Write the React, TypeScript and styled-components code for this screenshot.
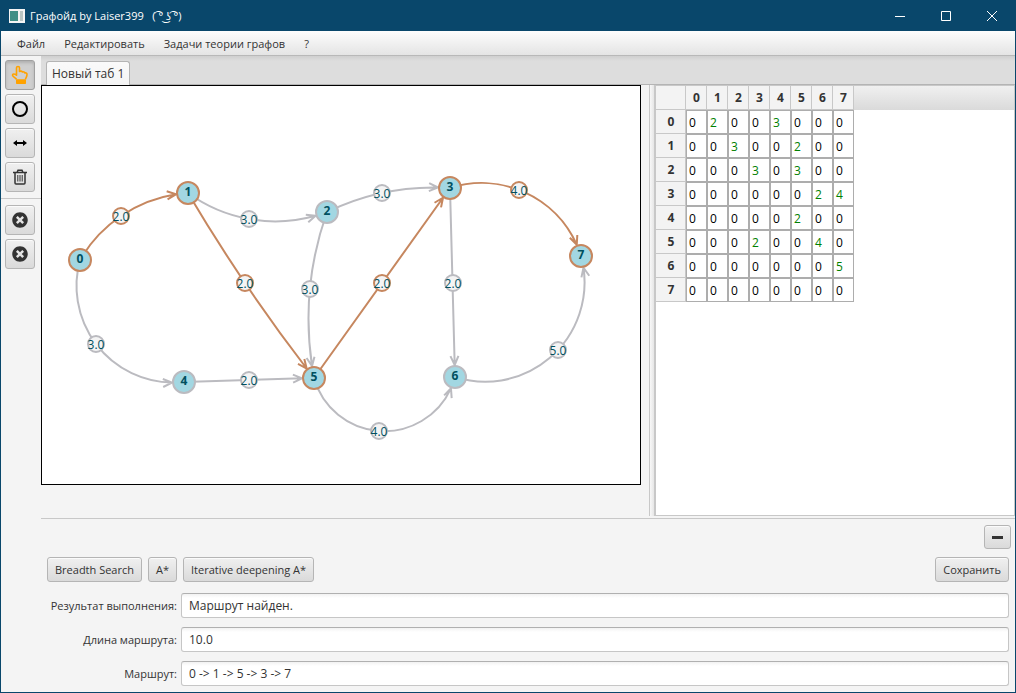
import React from "react";
import styled, { createGlobalStyle, css } from "styled-components";
import { FaTimesCircle } from "react-icons/fa";

const FONT = `"Open Sans", "Noto Sans", "Segoe UI", sans-serif`;
const FRAME = "#09476b";
const RIM = "#b5b5b5";
const GREY = "#bbbbc0";
const COPPER = "#c6875f";

const GlobalStyle = createGlobalStyle`
  *, *::before, *::after { box-sizing: border-box; }
  body { margin: 0; background: #f4f4f4; color: #333; font: 12px/16px ${FONT}; }
  button, input { font: inherit; color: inherit; margin: 0; }
`;

const Window = styled.div`
  display: flex;
  flex-direction: column;
  min-height: 100vh;
  border: solid ${FRAME};
  border-width: 0 1px 1px;
`;

const TitleBar = styled.header`
  display: flex;
  align-items: center;
  height: 31px;
  padding-left: 8px;
  background: ${FRAME};
  color: #fff;
`;

const Title = styled.h1`
  flex: 1;
  margin: 0 0 0 5px;
  font-size: 11px;
  font-weight: 400;
  white-space: pre;
`;

const CaptionButton = styled.button`
  display: grid;
  place-items: center;
  width: 46px;
  height: 31px;
  padding: 0;
  border: 0;
  background: none;
  color: #fff;
`;

const MenuBar = styled.nav`
  display: flex;
  height: 25px;
  padding-left: 8px;
  background: linear-gradient(#fdfdfd, #e4e4e4);
  border-bottom: 1px solid #b8b8b8;
`;

const MenuItem = styled.button`
  height: 24px;
  padding: 2px 11px 0 8px;
  border: 0;
  background: none;
  font-size: 11px;
`;

const Body = styled.div`
  flex: 1;
  display: flex;
`;

const ToolBar = styled.aside`
  display: flex;
  flex-direction: column;
  gap: 4px;
  width: 40px;
  padding: 4px;
`;

const buttonFace = css`
  border: 1px solid ${RIM};
  border-radius: 3px;
  background: linear-gradient(#f0f0f0, #dadada);
  box-shadow: inset 0 1px #fbfbfb;
`;

const ToolButton = styled.button<{ $pressed?: boolean }>`
  display: grid;
  place-items: center;
  width: 30px;
  height: 30px;
  padding: 0;
  ${buttonFace}
  ${(p) =>
    p.$pressed &&
    css`
      background: #cfcfcf;
      border-color: #a0a0a0;
      box-shadow: inset 0 2px 3px #b0b0b0;
    `}
`;

const ToolRule = styled.hr`
  width: 40px;
  margin: 2px -4px;
  border: 0;
  border-top: 1px solid #c8c8c8;
`;

const Main = styled.main`
  flex: 1;
  min-width: 0;
  display: flex;
  flex-direction: column;
`;

const TabStrip = styled.div`
  display: flex;
  align-items: flex-end;
  height: 29px;
  padding-left: 5px;
  background: linear-gradient(#cfcfcf, #dddddd 5px);
  border-bottom: 1px solid #b4b4b4;
`;

const Tab = styled.button`
  height: 24px;
  margin-bottom: -1px;
  padding: 0 5px;
  border: 1px solid #b4b4b4;
  border-bottom: 0;
  border-radius: 3px 3px 0 0;
  background: linear-gradient(#fafafa, #f4f4f4);
`;

const Split = styled.div`
  flex: 1;
  display: grid;
  grid-template-columns: minmax(0, 608fr) 6px minmax(0, 360fr);
`;

const Canvas = styled.svg`
  display: block;
  width: 100%;
  max-width: 600px;
  height: auto;
  background: #fff;
  border: 1px solid #000;
`;

const Divider = styled.div`
  border: solid #c8c8c8;
  border-width: 0 1px;
  background: linear-gradient(90deg, #f8f8f8, #e6e6e6);
`;

const MatrixPane = styled.section`
  border: 1px solid #c8c8c8;
  background: linear-gradient(#f0f0f0, #dadada) top / 100% 24px no-repeat #fff;
`;

const Matrix = styled.table`
  border-collapse: separate;
  border-spacing: 0;
  table-layout: fixed;
  width: 198px;
  background: #fff;
`;

const HeadCell = styled.th`
  width: 21px;
  height: 24px;
  padding: 1px 0 0 1px;
  background: #f3f3f3;
  border: solid #c8c8c8;
  border-width: 0 1px 1px 0;
  text-align: center;

  &:first-child {
    width: 30px;
  }
`;

const Cell = styled.td<{ $linked: boolean }>`
  height: 24px;
  padding: 1px 0 0 2px;
  border: 1px solid #adadad;
  color: ${(p) => (p.$linked ? "#008000" : "#000")};
`;

const Results = styled.section`
  display: flex;
  flex-direction: column;
  margin-top: 2px;
  border-top: 1px solid #c8c8c8;
  padding: 6px;
`;

const Row = styled.div`
  display: flex;
  align-items: center;
  gap: 6px;
`;

const CollapseButton = styled.button`
  display: grid;
  place-items: center;
  align-self: flex-end;
  width: 27px;
  height: 24px;
  margin: 0 -2px 8px 0;
  padding: 0;
  ${buttonFace}
`;

const Button = styled.button<{ $end?: boolean }>`
  height: 25px;
  padding: 0 7px;
  font-size: 11px;
  white-space: nowrap;
  ${buttonFace}
  ${(p) => p.$end && "margin-left: auto;"}
`;

const Form = styled.form`
  display: grid;
  grid-template-columns: 130px 1fr;
  align-items: center;
  gap: 9px 4px;
  margin-top: 11px;
`;

const FieldLabel = styled.label`
  font-size: 11px;
  text-align: right;
  white-space: nowrap;
`;

const Field = styled.input`
  width: 100%;
  height: 25px;
  padding: 0 7px;
  border: 1px solid #c6c6c6;
  border-top-color: #b0b0b0;
  border-radius: 3px;
  background: linear-gradient(#f2f2f2, #fff 4px);
`;

type Point = [number, number];

const NODES: { at: Point; onRoute?: boolean }[] = [
  { at: [39, 175], onRoute: true },
  { at: [147, 108], onRoute: true },
  { at: [286, 127] },
  { at: [409, 103], onRoute: true },
  { at: [143, 297] },
  { at: [273, 293], onRoute: true },
  { at: [414, 292] },
  { at: [540, 171], onRoute: true },
];

const EDGES: { from: number; to: number; weight: number; at: Point; onRoute?: boolean }[] = [
  { from: 0, to: 4, weight: 3, at: [55, 259] },
  { from: 1, to: 2, weight: 3, at: [208, 134] },
  { from: 2, to: 3, weight: 3, at: [341, 108] },
  { from: 2, to: 5, weight: 3, at: [269, 204] },
  { from: 3, to: 6, weight: 2, at: [412, 198] },
  { from: 4, to: 5, weight: 2, at: [208, 295] },
  { from: 5, to: 6, weight: 4, at: [338, 346] },
  { from: 6, to: 7, weight: 5, at: [517, 265] },
  { from: 0, to: 1, weight: 2, at: [80, 131], onRoute: true },
  { from: 1, to: 5, weight: 2, at: [204, 198], onRoute: true },
  { from: 5, to: 3, weight: 2, at: [341, 198], onRoute: true },
  { from: 3, to: 7, weight: 4, at: [478, 105], onRoute: true },
];

/* Arc through both node centres and the weight label, with a head on the target's rim. */
function edgePath([ax, ay]: Point, [bx, by]: Point, [cx, cy]: Point) {
  const cross = (bx - ax) * (cy - ay) - (by - ay) * (cx - ax);
  const length = Math.hypot(cx - ax, cy - ay);
  let tx: number;
  let ty: number;
  let line: string;
  if (Math.abs(cross) / length < 1) {
    tx = cx - (12 * (cx - ax)) / length;
    ty = cy - (12 * (cy - ay)) / length;
    line = `M${ax} ${ay}L${tx} ${ty}`;
  } else {
    const d = 2 * (ax * (by - cy) + bx * (cy - ay) + cx * (ay - by));
    const a2 = ax * ax + ay * ay;
    const b2 = bx * bx + by * by;
    const c2 = cx * cx + cy * cy;
    const ox = (a2 * (by - cy) + b2 * (cy - ay) + c2 * (ay - by)) / d;
    const oy = (a2 * (cx - bx) + b2 * (ax - cx) + c2 * (bx - ax)) / d;
    const r = Math.hypot(ax - ox, ay - oy);
    const sweep = cross > 0 ? 1 : 0;
    const turn = 2 * Math.asin(6 / r) * (sweep ? -1 : 1);
    const end = Math.atan2(cy - oy, cx - ox) + turn;
    tx = ox + r * Math.cos(end);
    ty = oy + r * Math.sin(end);
    line = `M${ax} ${ay}A${r} ${r} 0 0 ${sweep} ${tx} ${ty}`;
  }
  const ux = (cx - tx) / 12;
  const uy = (cy - ty) / 12;
  const arm = (s: number) => `${tx - 9 * ux - s * uy} ${ty - 9 * uy + s * ux}`;
  return `${line}M${arm(4)}L${tx} ${ty}L${arm(-4)}`;
}

const Graph = () => (
  <Canvas viewBox="1 1 598 398" role="img" aria-label="Граф">
    {EDGES.map((e) => (
      <path
        key={`${e.from}-${e.to}`}
        d={edgePath(NODES[e.from].at, e.at, NODES[e.to].at)}
        fill="none"
        stroke={e.onRoute ? COPPER : GREY}
        strokeWidth={2}
      />
    ))}
    <g textAnchor="middle" fill="#00505f" fontSize={12}>
      {EDGES.map((e) => (
        <g key={`${e.from}-${e.to}`}>
          <circle cx={e.at[0]} cy={e.at[1]} r={8} fill="#f4f4f4" stroke={e.onRoute ? COPPER : GREY} strokeWidth={2} />
          <text x={e.at[0]} y={e.at[1] + 5}>{e.weight.toFixed(1)}</text>
        </g>
      ))}
      {NODES.map((n, i) => (
        <g key={i} fontWeight={700}>
          <circle cx={n.at[0]} cy={n.at[1]} r={11} fill="#a2d7e2" stroke={n.onRoute ? COPPER : GREY} strokeWidth={2} />
          <text x={n.at[0]} y={n.at[1] + 3}>{i}</text>
        </g>
      ))}
    </g>
  </Canvas>
);

const HandIcon = () => (
  <svg width="18" height="20" viewBox="0 0 18 20" fill="none" stroke="#ffa200" strokeWidth="1.6" strokeLinejoin="round">
    <path d="M5.5 14.5C5 12.500 1.500 12 1.500 10.200C1.500 8.800 3.200 8.600 5.500 10.200V2.800C5.500 1 8.500 1 8.500 2.800V6.500C9.500 5.800 11 6 11.400 7C12.500 6.500 13.500 7 13.900 8C15.200 7.600 16 8.300 16 9.600C16 12 14.600 12.800 14.400 14.500" />
    <rect x="5.800" y="15" width="8.400" height="3.200" fill="#ffa200" />
  </svg>
);

const TrashIcon = () => (
  <svg width="16" height="16" viewBox="0 0 16 16" fill="none" stroke="#333" strokeWidth="1.500">
    <path d="M1 3.500H15M5 3.500L6 1.200H10L11 3.500M3 3.500V14C3 14.600 3.400 15 4 15H12C12.600 15 13 14.600 13 14V3.500" />
    <path d="M5.800 6V12.500M8 6V12.500M10.200 6V12.500" strokeWidth="1" />
  </svg>
);

const rows = NODES.map((_, from) =>
  NODES.map((_, to) => EDGES.find((e) => e.from === from && e.to === to)?.weight ?? 0)
);

const FIELDS = [
  { id: "result", label: "Результат выполнения:", value: "Маршрут найден." },
  { id: "length", label: "Длина маршрута:", value: "10.0" },
  { id: "route", label: "Маршрут:", value: "0 -> 1 -> 5 -> 3 -> 7" },
];

export default function App() {
  return (
    <Window>
      <GlobalStyle />
      <TitleBar>
        <svg width="16" height="14" viewBox="0 0 16 14" aria-hidden="true">
          <rect width="16" height="14" fill="#f4f4f4" />
          <rect x="1" y="2" width="8" height="10" fill="#3f8f86" />
          <rect x="11" y="2" width="3" height="10" fill="#b9c4c2" />
        </svg>
        <Title>{"Графойд by Laiser399   ( ͡° ͜ʖ ͡°)"}</Title>
        <CaptionButton aria-label="Свернуть">
          <svg width="10" height="10" stroke="currentColor"><path d="M0 5.500H10" /></svg>
        </CaptionButton>
        <CaptionButton aria-label="Развернуть">
          <svg width="10" height="10" fill="none" stroke="currentColor"><path d="M.5 .5H9.500V9.500H.5Z" /></svg>
        </CaptionButton>
        <CaptionButton aria-label="Закрыть">
          <svg width="10" height="10" stroke="currentColor"><path d="M0 0L10 10M10 0L0 10" /></svg>
        </CaptionButton>
      </TitleBar>
      <MenuBar>
        {["Файл", "Редактировать", "Задачи теории графов", "?"].map((t) => (
          <MenuItem key={t}>{t}</MenuItem>
        ))}
      </MenuBar>
      <Body>
        <ToolBar>
          <ToolButton $pressed aria-label="Выбор"><HandIcon /></ToolButton>
          <ToolButton aria-label="Вершина">
            <svg width="16" height="16"><circle cx="8" cy="8" r="7" fill="none" stroke="#000" strokeWidth="2" /></svg>
          </ToolButton>
          <ToolButton aria-label="Ребро">
            <svg width="16" height="8"><path d="M1 4L5 1V3H11V1L15 4L11 7V5H5V7Z" /></svg>
          </ToolButton>
          <ToolButton aria-label="Удалить"><TrashIcon /></ToolButton>
          <ToolRule />
          <ToolButton aria-label="Очистить рёбра"><FaTimesCircle size={16} /></ToolButton>
          <ToolButton aria-label="Очистить граф"><FaTimesCircle size={16} /></ToolButton>
        </ToolBar>
        <Main>
          <TabStrip>
            <Tab>Новый таб 1</Tab>
          </TabStrip>
          <Split>
            <Graph />
            <Divider />
            <MatrixPane>
              <Matrix>
                <thead>
                  <tr>
                    <HeadCell />
                    {rows.map((_, i) => <HeadCell key={i} scope="col">{i}</HeadCell>)}
                  </tr>
                </thead>
                <tbody>
                  {rows.map((row, i) => (
                    <tr key={i}>
                      <HeadCell scope="row">{i}</HeadCell>
                      {row.map((w, j) => <Cell key={j} $linked={w > 0}>{w}</Cell>)}
                    </tr>
                  ))}
                </tbody>
              </Matrix>
            </MatrixPane>
          </Split>
          <Results>
            <CollapseButton aria-label="Скрыть панель">
              <svg width="11" height="3"><rect width="11" height="3" fill="#333" /></svg>
            </CollapseButton>
            <Row>
              <Button>Breadth Search</Button>
              <Button>A*</Button>
              <Button>Iterative deepening A*</Button>
              <Button $end>Сохранить</Button>
            </Row>
            <Form>
              {FIELDS.map((f) => (
                <React.Fragment key={f.id}>
                  <FieldLabel htmlFor={f.id}>{f.label}</FieldLabel>
                  <Field id={f.id} defaultValue={f.value} readOnly />
                </React.Fragment>
              ))}
            </Form>
          </Results>
        </Main>
      </Body>
    </Window>
  );
}
